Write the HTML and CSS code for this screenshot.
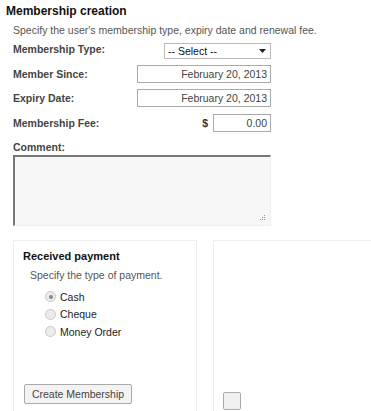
FILE: index.html
```html
<!DOCTYPE html>
<html>
<head>
<meta charset="utf-8">
<link rel="stylesheet" href="styles.css">
</head>
<body>
<div class="page">
  <h2 class="title">Membership creation</h2>
  <p class="desc">Specify the user's membership type, expiry date and renewal fee.</p>
  <div class="form">
    <div class="row">
      <label class="lbl">Membership Type:</label>
      <div class="select"><span>-- Select --</span><svg class="caret" width="7" height="4" viewBox="0 0 7 4"><path d="M0 0H7L3.5 4Z" fill="#222"/></svg></div>
    </div>
    <div class="row">
      <label class="lbl">Member Since:</label>
      <div class="input date">February 20, 2013</div>
    </div>
    <div class="row">
      <label class="lbl">Expiry Date:</label>
      <div class="input date">February 20, 2013</div>
    </div>
    <div class="row">
      <label class="lbl">Membership Fee:</label>
      <div class="fee"><span class="dollar">$</span><div class="input money">0.00</div></div>
    </div>
    <label class="lbl comment-lbl">Comment:</label>
    <div class="textarea"><svg class="grip" width="6" height="6" viewBox="0 0 6 6"><rect x="4" y="0" width="1" height="1" fill="#999"/><rect x="2" y="2" width="1" height="1" fill="#999"/><rect x="4" y="2" width="1" height="1" fill="#999"/><rect x="0" y="4" width="1" height="1" fill="#999"/><rect x="2" y="4" width="1" height="1" fill="#999"/><rect x="4" y="4" width="1" height="1" fill="#999"/></svg></div>
  </div>
  <div class="panels">
    <div class="panel left">
      <h3 class="ptitle">Received payment</h3>
      <p class="pdesc">Specify the type of payment.</p>
      <ul class="radios">
        <li><span class="radio checked"></span>Cash</li>
        <li><span class="radio"></span>Cheque</li>
        <li><span class="radio"></span>Money Order</li>
      </ul>
      <div class="btn">Create Membership</div>
    </div>
    <div class="panel right">
      <div class="smallbtn"></div>
    </div>
  </div>
</div>
</body>
</html>
```
FILE: styles.css
```css
* { box-sizing: border-box; }
html, body { margin: 0; padding: 0; background: #fff; }
body { font-family: "Liberation Sans", Arial, sans-serif; font-size: 10.5px; color: #444; overflow: hidden; }
.page { padding: 4px 0 0 6px; }
.title { margin: 0; font-size: 12px; font-weight: bold; color: #111; line-height: 14px; }
.desc { margin: 6px 0 0 7px; color: #555; line-height: 13px; }
.form { margin-left: 7px; width: 258px; margin-top: 6px; }
.row { display: flex; justify-content: space-between; align-items: flex-start; height: 24.5px; }
.lbl { font-weight: bold; color: #444; line-height: 13px; display: block; }
.select { width: 107px; height: 16px; border: 1px solid #bbb; background: #fff; display: flex; align-items: center; justify-content: space-between; padding: 0 4px 0 3px; color: #111; }
.caret { display: block; }
.input { height: 18px; border: 1px solid #aaa; background: #fff; text-align: right; padding: 0 3px 0 0; color: #444; line-height: 16px; }
.date { width: 134px; margin-top: -3px; }
.fee { display: flex; align-items: center; gap: 5px; margin-top: -3px; }
.dollar { font-weight: bold; color: #333; }
.money { width: 58px; }
.textarea { margin-top: 1px; height: 71px; background: #f7f7f7; border-top: 2px solid #777; border-left: 2px solid #777; border-right: 1px solid #f0f0f0; border-bottom: 1px solid #f0f0f0; display: flex; justify-content: flex-end; align-items: flex-end; padding: 0 4px 4px 0; }
.grip { display: block; }
.panels { display: flex; gap: 16px; margin: 14px 0 0 7px; }
.panel { border: 1px solid #eee; border-bottom: none; height: 180px; }
.left { width: 184px; padding: 8px 0 0 9px; position: relative; }
.right { flex: 1; margin-right: -10px; padding: 151px 0 0 9px; }
.ptitle { margin: 0; font-size: 11px; font-weight: bold; color: #111; line-height: 14px; }
.pdesc { margin: 6px 0 0 7px; color: #555; line-height: 13px; }
.radios { list-style: none; margin: 6px 0 0 22px; padding: 0; }
.radios li { display: flex; align-items: center; height: 17.5px; color: #222; }
.radio { width: 11px; height: 11px; border-radius: 50%; border: 1px solid #c8c8c8; background: #ececec; margin-right: 4px; position: relative; }
.radio.checked::after { content: ""; position: absolute; left: 2.5px; top: 2.5px; width: 4px; height: 4px; border-radius: 50%; background: #888; }
.btn { position: absolute; left: 10px; top: 143px; width: 108px; height: 20px; border: 1px solid #aaa; border-radius: 2px; background: #f3f3f3; color: #444; text-align: center; line-height: 18px; }
.smallbtn { width: 18px; height: 18px; border: 1px solid #aaa; border-radius: 2px; background: #f0f0f0; }
```
